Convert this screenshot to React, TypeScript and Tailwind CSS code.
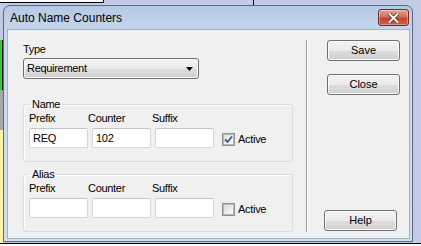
import { useState } from 'react';

const btn =
  'h-[21px] w-[73px] rounded-[3px] border border-[#707070] bg-[linear-gradient(to_bottom,#f2f2f2_0%,#ebebeb_50%,#dddddd_51%,#cfcfcf_100%)] shadow-[inset_0_0_0_1px_#fbfbfb] text-[11px] leading-[13px] text-black';

const label = 'text-[11px] leading-[13px] tracking-[-0.3px] text-black';

function Checkbox({ checked }: { checked: boolean }) {
  return (
    <div className="flex h-[13px] w-[13px] items-center justify-center border border-[#8e8f8f] bg-white">
      <div className="flex h-[11px] w-[11px] items-center justify-center border border-[#b9b9b9] bg-[linear-gradient(135deg,#dcdcdc,#fbfbfb)]">
        {checked && (
          <svg width="9" height="9" viewBox="0 0 9 9">
            <path d="M1 4.5 L3.5 7 L8 1.5" stroke="#3a5a9a" strokeWidth="1.8" fill="none" />
          </svg>
        )}
      </div>
    </div>
  );
}

function FieldGroup({ title, prefix, counter, suffix, active }: {
  title: string; prefix: string; counter: string; suffix: string; active: boolean;
}) {
  const [on, setOn] = useState(active);
  const input =
    'h-[20px] w-[59px] rounded-[2px] border border-[#d3d6da] border-t-[#c2c5ca] bg-white px-[3px] text-[11px] leading-[13px] tracking-[-0.3px] text-black outline-none';
  return (
    <fieldset className="w-[270px] rounded-[3px] border border-[#d5dfe5] shadow-[inset_1px_1px_0_#fff]">
      <legend className={`ml-[6px] px-[2px] ${label}`}>{title}</legend>
      <div className="flex flex-col pl-[5px] pt-[1px] pb-[13px]">
        <div className="flex">
          <span className={`w-[59px] ${label}`}>Prefix</span>
          <span className={`w-[64px] ${label}`}>Counter</span>
          <span className={label}>Suffix</span>
        </div>
        <div className="mt-[3px] flex items-center gap-[4px]">
          <input className={input} defaultValue={prefix} />
          <input className={input} defaultValue={counter} />
          <input className={input} defaultValue={suffix} />
          <button className="ml-[4px] mt-[2px] flex items-center gap-[3px]" onClick={() => setOn(!on)}>
            <Checkbox checked={on} />
            <span className={label}>Active</span>
          </button>
        </div>
      </div>
    </fieldset>
  );
}

export default function App() {
  return (
    <div className="relative h-[246px] w-[421px] overflow-hidden bg-[#c3cae5] font-['Liberation_Sans',Arial,sans-serif]">
      {/* desktop behind the dialog */}
      <div className="absolute left-0 top-0 h-[3px] w-[104px] border-b border-r border-black bg-white" />
      <div className="absolute left-[253px] top-0 h-[5px] w-px bg-black" />
      <div className="absolute left-0 top-[40px] h-[50px] w-[3px] border-r border-black bg-[#2fd12f]" />
      <div className="absolute left-0 top-[90px] h-[40px] w-[3px] bg-[#a8a8a8]" />
      <div className="absolute left-0 top-[130px] h-[116px] w-[3px] bg-[#fdf3a8]" />
      <div className="absolute left-0 top-[243px] h-[3px] w-[421px] border-t border-black bg-white" />

      {/* dialog window */}
      <div className="absolute left-[3px] top-[5px] flex h-[237px] w-[410px] flex-col rounded-t-[7px] border border-[#5a6a82] bg-[linear-gradient(to_bottom,#b4c9e3_0%,#c9d9ec_12%,#cfdff0_100%)]">
        {/* title bar */}
        <div className="flex h-[23px] shrink-0">
          <span className="ml-[6px] mt-[5px] text-[12px] leading-[14px] text-black">Auto Name Counters</span>
          <button className="ml-auto mr-[3px] mt-[3px] flex h-[17px] w-[31px] items-center justify-center rounded-[3px] border border-[#6e2c24] bg-[linear-gradient(to_bottom,#e6a495_0%,#d6705c_45%,#c4452f_55%,#d0604a_100%)] shadow-[inset_0_0_0_1px_rgba(255,255,255,0.35)]">
            <svg width="11" height="10" viewBox="0 0 11 10">
              <path d="M1.5 1 L9.5 9 M9.5 1 L1.5 9" stroke="#5a2a22" strokeWidth="3.6" strokeLinecap="square" />
              <path d="M1.5 1 L9.5 9 M9.5 1 L1.5 9" stroke="#ffffff" strokeWidth="2" strokeLinecap="square" />
            </svg>
          </button>
        </div>

        {/* client area */}
        <div className="mb-[2px] ml-[3px] mr-[2px] flex flex-1 border border-[#9fb3ca] bg-[#f0f0f0]">
          <div className="flex w-[298px] flex-col pl-[15px] pt-[13px]">
            <span className={label}>Type</span>
            <button className="mt-[2px] flex h-[21px] w-[176px] items-center justify-between rounded-[3px] border border-[#707070] bg-[linear-gradient(to_bottom,#f2f2f2_0%,#ebebeb_50%,#dddddd_51%,#cfcfcf_100%)] pl-[3px] pr-[5px] shadow-[inset_0_0_0_1px_#fbfbfb]">
              <span className={label}>Requirement</span>
              <svg width="7" height="4" viewBox="0 0 7 4">
                <path d="M0 0 H7 L3.5 4 Z" fill="#000" />
              </svg>
            </button>
            <div className="mt-[19px]">
              <FieldGroup title="Name" prefix="REQ" counter="102" suffix="" active />
            </div>
            <div className="mt-[6px]">
              <FieldGroup title="Alias" prefix="" counter="" suffix="" active={false} />
            </div>
          </div>

          <div className="mb-[6px] mt-[10px] w-px bg-[#a0a0a0] shadow-[1px_0_0_#fff]" />

          <div className="flex flex-1 flex-col pb-[7px] pt-[10px]">
            <button className={`${btn} ml-[20px] border-[#3c7fb1] bg-[linear-gradient(to_bottom,#eaf6fd_0%,#d9f0fc_50%,#bee6fd_51%,#a7d9f5_100%)] shadow-[inset_0_0_0_1px_#48d0f6]`}>
              Save
            </button>
            <button className={`${btn} ml-[20px] mt-[13px]`}>Close</button>
            <button className={`${btn} ml-[17px] mt-auto`}>Help</button>
          </div>
        </div>
      </div>
    </div>
  );
}
